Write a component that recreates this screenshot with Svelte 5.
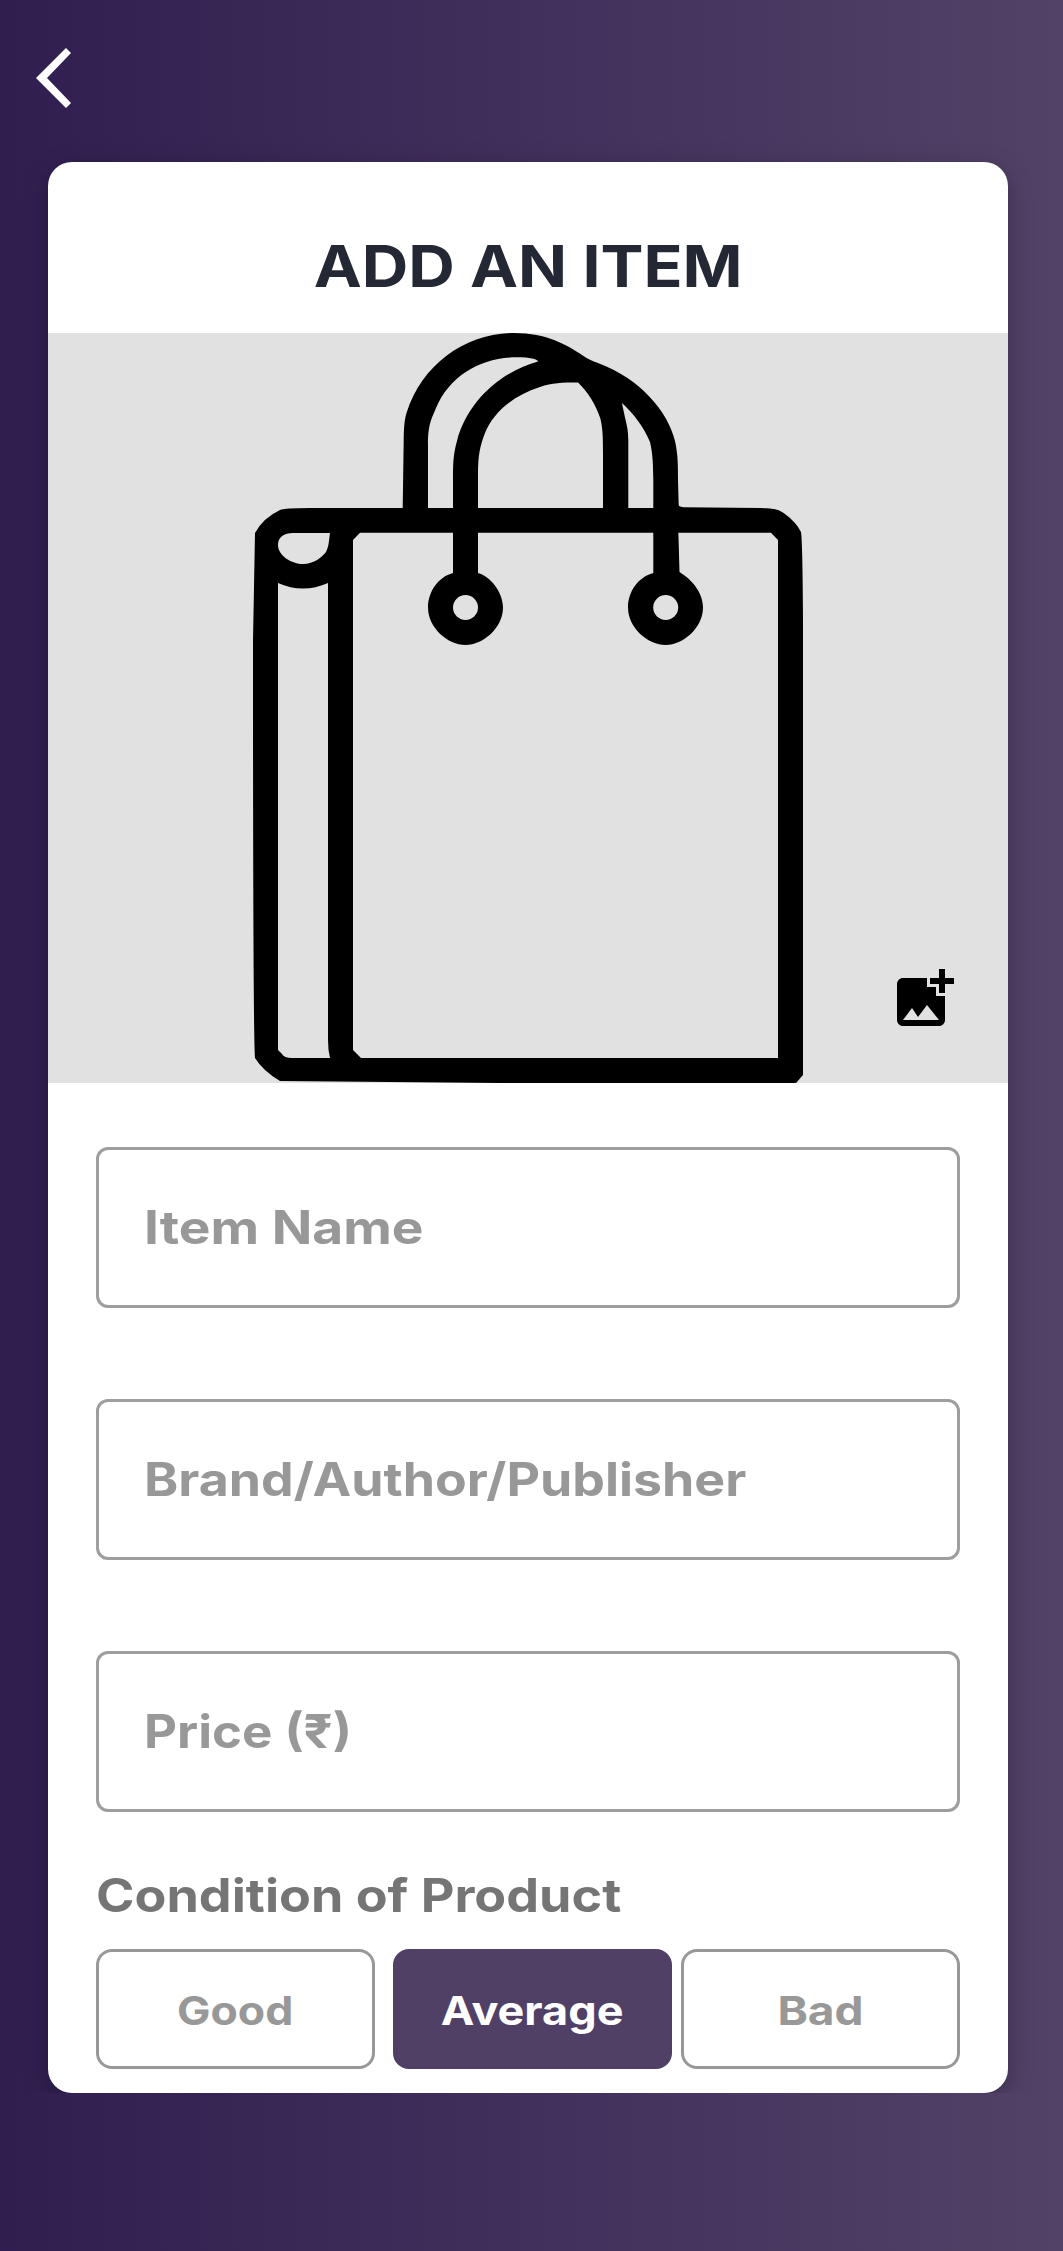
<script>
  const fields = [
    { label: 'Item Name', stretch: 1.158 },
    { label: 'Brand/Author/Publisher', stretch: 1.127 },
    { label: 'Price (₹)', stretch: 1.108 }
  ];
  const conditions = [
    { label: 'Good', stretch: 1.115 },
    { label: 'Average', stretch: 1.125 },
    { label: 'Bad', stretch: 1.15 }
  ];
  let selected = $state('Average');
</script>

<main class="screen">
  <header class="bar">
    <button class="back" aria-label="Back">
      <svg viewBox="0 0 36 60" width="36" height="60"><path d="M30 0l5 5L11 30l24 25-5 5L0 30z" fill="#fff" /></svg>
    </button>
  </header>

  <div class="viewport">
    <section class="card">
      <h1><span class="wide">ADD AN ITEM</span></h1>
      <div class="photo">
        <svg class="bag" viewBox="48 333 960 750" width="960" height="750">
          <path
            fill-rule="evenodd"
            d="M402.700 508L403.700 440C404 425 404.500 420 406.500 413C422 364 466 333 514 333C547 333 567 345 582 355C588 359 592 361 598 363C641 379 668 412 675 441C678 455 678 465 678 480L678.700 505Q679 507 684 507.300L760 508C777 508.500 779 510 785 514Q796 522 801 532Q802.500 540 803 620V1075L796 1083L500 1083L280 1081Q263 1071 255 1058Q253 1040 253 640L255 533Q263 518 280 510Q284 508 310 508Z
            M428 508V445C428 425 431 420 436 408C450 375 482 357 517 357.300C530 357.300 537 359 538 361.500C500 372 467 402 457 441C453 455 453 465 453 480V508Z
            M478 508V475C478 455 480 446 485 433C493 413 512 396 540 387C552 382.700 562 382.500 578 382.500C588 392 596 405 600.500 419C603 430 603 440 603 455V508Z
            M628.300 508V440C628.300 427 626 424 622 403C633 413 644 427 650 442C653 455 653 465 653.300 480V508Z
            M330 533H293C284 533 278 537 278 545C278 556 292 564 303 564C314 564 322 557 326 552C329 546 329 540 330 533Z
            M278 583Q303 594 328 583V1040Q328 1050 330 1058H292Q284 1058 282 1054L278 1050Z
            M353 540L360 532.700H771L778 540V1058H361L353 1050Z"
          />
          <path d="M453 530h25v43C490 576 503 592 503 607.500C503 628 483 645 465.500 645C448 645 428 628 428 607.500C428 592 438 577 453 573Z" />
          <path d="M653.300 530h25L679.500 572C691 579 703 592 703 607.500C703 628 683 645 665.700 645C648 645 628 628 628 607.500C628 592 638 577 653.300 573Z" />
          <circle cx="465.500" cy="607.500" r="12.500" fill="#e1e1e1" />
          <circle cx="665.700" cy="607.500" r="12.500" fill="#e1e1e1" />
        </svg>
        <button class="add-photo" aria-label="Add photo">
          <svg viewBox="0 0 24 24" width="72" height="72"><path d="M19 7v3h-2V7h-3V5h3V2h2v3h3v2zm-3 4V8h-3V5H5c-1.100 0-2 .9-2 2v12c0 1.100.9 2 2 2h12c1.100 0 2-.9 2-2v-8zM5 19l3-4 2 3 3-4 4 5z" /></svg>
        </button>
      </div>

      <form class="form">
        {#each fields as field}
          <div class="field"><span class="text" style:transform="scaleX({field.stretch})">{field.label}</span></div>
        {/each}
      </form>

      <h2><span class="text wide">Condition of Product</span></h2>
      <div class="conditions">
        {#each conditions as condition}
          <button
            class="condition"
            class:active={condition.label === selected}
            onclick={() => (selected = condition.label)}
          >
            <span class="caption" style:transform="scaleX({condition.stretch})">{condition.label}</span>
          </button>
        {/each}
      </div>
    </section>
  </div>
</main>

<style>
  :global(body) { margin: 0; }
  .screen {
    box-sizing: border-box;
    width: 1063px;
    height: 2251px;
    overflow: hidden;
    background: linear-gradient(90deg, #301e50, #524267);
    font-family: Inter, sans-serif;
    font-weight: 700;
  }
  button { border: 0; padding: 0; background: none; font: inherit; }
  svg { display: block; }
  .bar { box-sizing: border-box; height: 138px; padding: 48px 36px; }
  /* clips the card's shadow at its bottom edge */
  .viewport { overflow: hidden; padding: 24px 55px 0 48px; }
  .card {
    box-sizing: border-box;
    width: 960px;
    height: 1931px;
    overflow: hidden;
    border-radius: 24px;
    background: #fff;
    box-shadow: 0 6px 24px rgba(0, 0, 0, 0.25);
  }
  h1, h2 { margin: 0; font-weight: 700; }
  h1 { height: 171px; line-height: 208px; text-align: center; font-size: 58px; color: #232834; }
  .wide, .text, .caption { display: inline-block; white-space: nowrap; }
  .wide { transform: scaleX(1.11); }
  .text { transform-origin: 0 50%; }
  .photo { position: relative; height: 750px; background: #e1e1e1; }
  .add-photo { position: absolute; right: 48px; bottom: 48px; }
  .form { display: flex; flex-direction: column; gap: 91px; padding: 64px 48px 0; }
  .field {
    box-sizing: border-box;
    height: 161px;
    padding-left: 45px;
    border: 3px solid #9e9e9e;
    border-radius: 12px;
    font-size: 46px;
    line-height: 155px;
    color: #989898;
  }
  h2 { height: 137px; padding: 0 48px; line-height: 166px; font-size: 46px; color: #757575; }
  h2 .wide { transform: scaleX(1.132); }
  .conditions { display: flex; padding: 0 48px; }
  .condition {
    box-sizing: border-box;
    width: 279px;
    height: 120px;
    padding-top: 2px;
    border: 3px solid #989898;
    border-radius: 16px;
    font-size: 40px;
    color: #989898;
  }
  .condition:nth-child(2) { margin: 0 9px 0 18px; }
  .condition.active { border-color: #514066; background: #514066; color: #fff; }
</style>
